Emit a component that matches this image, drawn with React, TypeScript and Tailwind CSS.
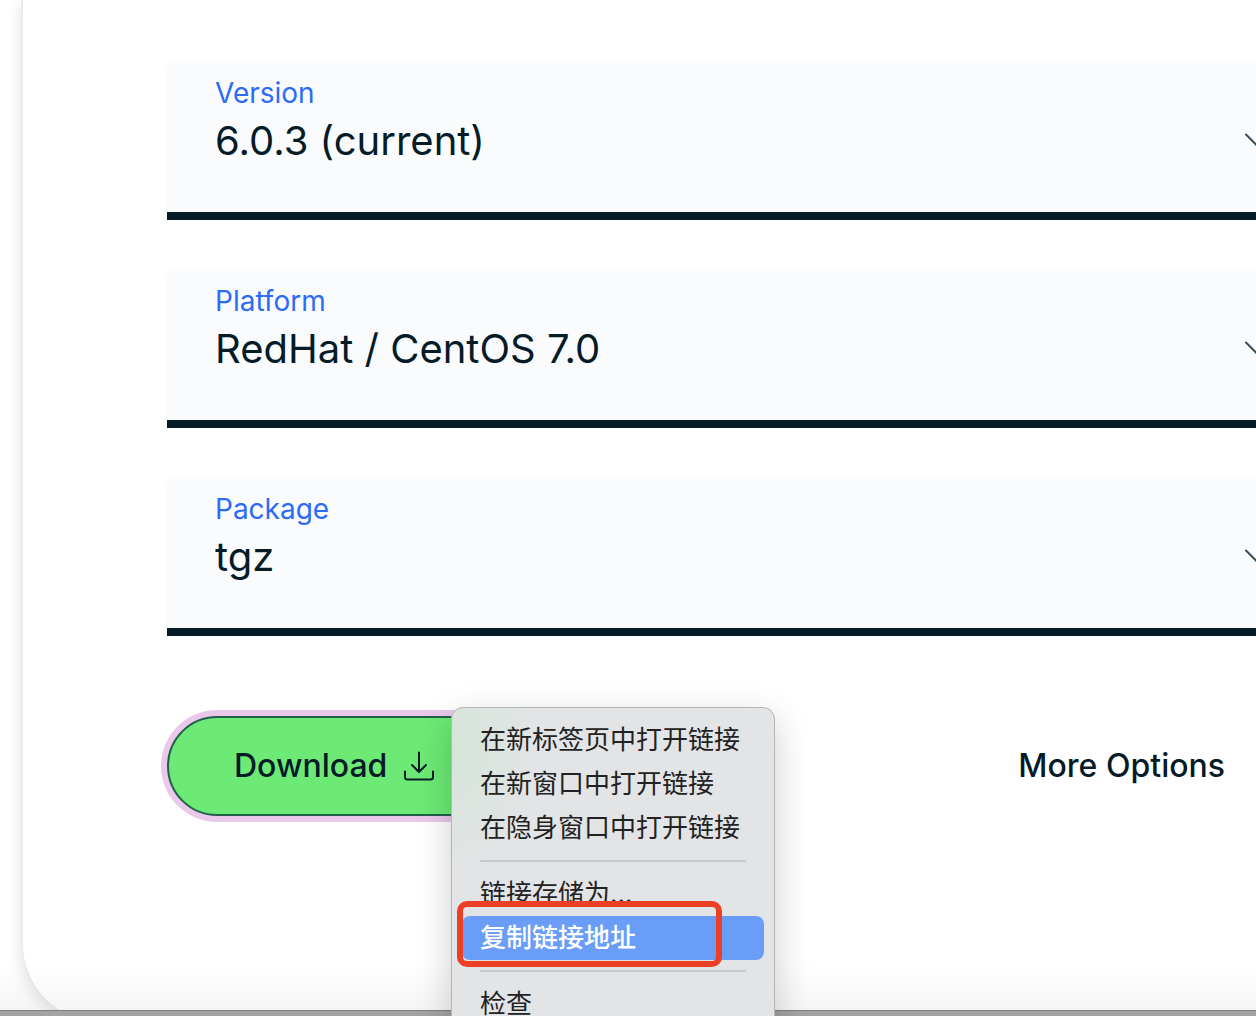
import React from "react";

type FieldProps = { id: string; label: string; options: string[] };

function Chevron() {
  return (
    <svg className="h-7 w-7 shrink-0" viewBox="0 0 28 28" fill="none" aria-hidden="true">
      <path d="M1 7.5 14 20.5 27 7.5" stroke="#3d4f58" strokeWidth="2" strokeLinecap="round" />
    </svg>
  );
}

function Field({ id, label, options }: FieldProps) {
  return (
    <div className="rounded-t-lg border-b-8 border-[#061b28] bg-[#f9fbfd] px-12 pt-[17px] pb-[39px]">
      <label htmlFor={id} className="block text-[28px] leading-8 text-[#2c6bf6]">
        {label}
      </label>
      <div className="flex items-center">
        <select
          id={id}
          className="h-16 min-w-0 flex-1 appearance-none bg-transparent text-[40px] text-[#061b28] outline-none"
        >
          {options.map((option) => (
            <option key={option}>{option}</option>
          ))}
        </select>
        <Chevron />
      </div>
    </div>
  );
}

function DownloadIcon() {
  return (
    <svg className="h-8 w-8" viewBox="0 0 32 32" fill="none" stroke="#061b28" strokeWidth="2" strokeLinecap="round" strokeLinejoin="round" aria-hidden="true">
      <path d="M16 2.5V21.5M9 15l7 7 7-7" />
      <path d="M2 21.5V27a2.5 2.5 0 0 0 2.5 2.5H27.5a2.5 2.5 0 0 0 2.5-2.5V21.5" />
    </svg>
  );
}

function MenuItem({ children }: { children: React.ReactNode }) {
  return (
    <button type="button" role="menuitem" className="block h-11 w-full px-[18px] text-left">
      {children}
    </button>
  );
}

function Separator() {
  return <hr className="mx-[18px] my-[10px] border-t-2 border-[#c8c9cb]" />;
}

function ContextMenu() {
  return (
    <div
      role="menu"
      className="absolute -top-[9px] left-[284px] z-10 w-[324px] rounded-xl border border-[#b4b6b8] bg-[#e3e4e6] bg-[radial-gradient(ellipse_90px_130px_at_0_40px,#d6e5da,#e3e4e6)] p-[10px] text-[26px] leading-[44px] whitespace-nowrap text-[#222] shadow-[0_12px_36px_rgba(0,0,0,0.2)]"
    >
      <MenuItem>在新标签页中打开链接</MenuItem>
      <MenuItem>在新窗口中打开链接</MenuItem>
      <MenuItem>在隐身窗口中打开链接</MenuItem>
      <Separator />
      <MenuItem>链接存储为...</MenuItem>
      <div className="relative">
        <button
          type="button"
          role="menuitem"
          className="block h-11 w-full rounded-lg bg-[#699df8] px-[18px] text-left font-medium text-white"
        >
          复制链接地址
        </button>
        <div className="pointer-events-none absolute -top-[15px] -left-[5px] h-[66px] w-[265px] rounded-[10px] border-6 border-[#eb4025]" />
      </div>
      <Separator />
      <MenuItem>检查</MenuItem>
    </div>
  );
}

export default function App() {
  return (
    <div className="relative flex min-h-screen flex-col overflow-hidden bg-white font-['Inter','Noto_Sans_CJK_SC',sans-serif] text-[#061b28]">
      <main className="flex-1 pl-[21px]">
        <section className="-mr-[65px] -mb-[14px] rounded-bl-[80px] border-b-2 border-l-2 border-[#e8edeb] bg-white pt-[60px] pb-[206px] pl-36 shadow-[0_4px_16px_rgba(0,0,0,0.12)]">
          <form className="flex flex-col gap-12">
            <Field id="version" label="Version" options={["6.0.3 (current)"]} />
            <Field id="platform" label="Platform" options={["RedHat / CentOS 7.0"]} />
            <Field id="package" label="Package" options={["tgz"]} />
          </form>
          <div className="mt-20 flex items-center justify-between pr-24">
            <div className="relative">
              <a
                href="#download"
                className="flex h-[100px] items-center gap-4 rounded-full border-2 border-[#23604c] bg-[#6cea75] px-[65px] text-[32px] font-medium ring-6 ring-[#eac8ea]"
              >
                Download
                <DownloadIcon />
              </a>
              <ContextMenu />
            </div>
            <a href="#options" className="text-[32px] font-medium">
              More Options
            </a>
          </div>
        </section>
      </main>
      <div className="relative z-[1] h-1.5 border-t border-[#858585] bg-[#a3a3a3]">
        <div className="pointer-events-none absolute inset-x-0 bottom-full h-12 bg-linear-to-b from-transparent to-black/4" />
      </div>
    </div>
  );
}
